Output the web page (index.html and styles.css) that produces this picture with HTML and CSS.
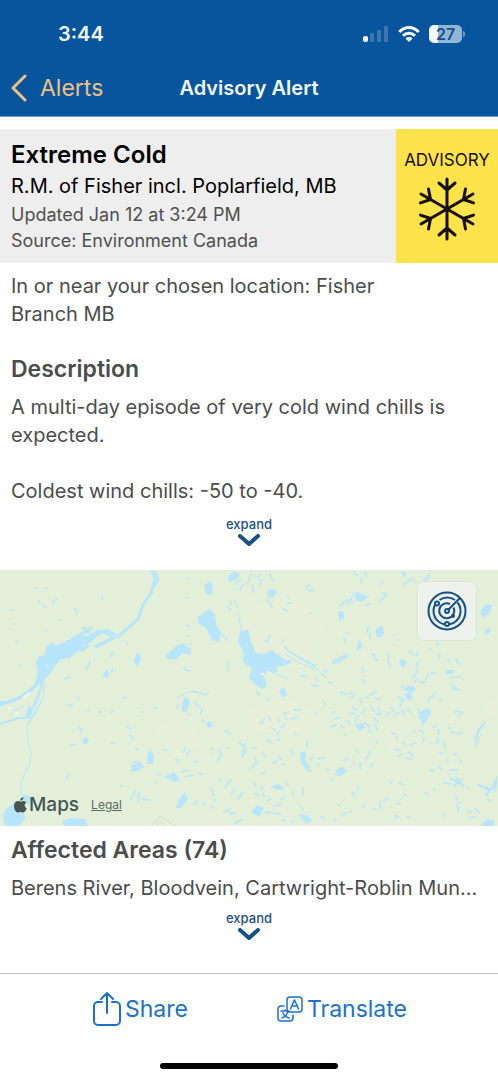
FILE: index.html
```html
<!DOCTYPE html>
<html lang="en">
<head>
<meta charset="utf-8">
<meta name="viewport" content="width=device-width, initial-scale=1">
<title>Advisory Alert</title>
<link rel="stylesheet" href="styles.css">
</head>
<body>
<div class="screen">
  <header class="top">
    <div class="status">
      <span class="time">3:44</span>
      <span class="status-icons">
        <svg class="signal" viewBox="0 0 26 18" aria-hidden="true"><rect x="0" y="11" width="5" height="6" rx="2" fill="#fff"/><g fill="#3d76b3"><rect x="7" y="8" width="4" height="9" rx="1"/><rect x="14" y="5" width="4" height="12" rx="1"/><rect x="21" y="1" width="4" height="16" rx="1"/></g></svg>
        <svg class="wifi" viewBox="0 0 22 18" aria-hidden="true"><g fill="none" stroke="#fff" stroke-width="3"><path d="M1.300 7C7 1 15 1 20.700 7"/><path d="M5 10.800c3.500-3.500 8.500-3.500 12 0"/></g><path d="M7.500 13.500c2-1.900 5-1.900 7 0L11 17z" fill="#fff"/></svg>
        <span class="battery"><span class="level">27</span></span>
      </span>
    </div>
    <nav class="bar">
      <a class="back" href="#"><svg viewBox="0 0 18 28" aria-hidden="true"><path d="M15 2L3 14l12 12" fill="none" stroke="#eec282" stroke-width="3" stroke-linecap="round" stroke-linejoin="round"/></svg>Alerts</a>
      <h1 class="title">Advisory Alert</h1>
    </nav>
  </header>

  <main class="content">
    <section class="card">
      <div class="card-text">
        <h2 class="card-title">Extreme Cold</h2>
        <p class="place">R.M. of Fisher incl. Poplarfield, MB</p>
        <p class="meta">Updated Jan 12 at 3:24 PM</p>
        <p class="meta">Source: Environment Canada</p>
      </div>
      <div class="badge">
        <span>ADVISORY</span>
        <svg class="flake" viewBox="-32 -32 64 64" aria-hidden="true"><defs><path id="arm" d="M0 0V-30M0-19L-8-26M0-19L8-26"/></defs><g fill="none" stroke="#130f05" stroke-width="3" stroke-linecap="round"><use href="#arm"/><use href="#arm" transform="rotate(60)"/><use href="#arm" transform="rotate(120)"/><use href="#arm" transform="rotate(180)"/><use href="#arm" transform="rotate(240)"/><use href="#arm" transform="rotate(300)"/></g></svg>
      </div>
    </section>

    <section class="copy">
      <p>In or near your chosen location: Fisher<br>Branch MB</p>
      <h2 class="heading">Description</h2>
      <p>A multi-day episode of very cold wind chills is expected.</p>
      <p class="chill">Coldest wind chills: -50 to -40.</p>
    </section>
    <button class="expand" type="button">expand<svg viewBox="0 0 22 13" aria-hidden="true"><path d="M2 2l9 8 9-8"/></svg></button>

    <section class="map" aria-label="Alert map">
      <svg class="map-art" viewBox="0 0 498 256" preserveAspectRatio="xMidYMid slice" aria-hidden="true">
        <rect width="498" height="256" fill="#e4efda"/>
        <g fill="#e8efdc" opacity=".7"><path d="M252 38l45-12 26 30-20 43-48-8-14-29zM245 138l50-8 28 18-18 20-49-8zM155 158l27-10 20 24-19 18zM382 165l14-15 8 22-12 10zM485 132l13-6v16l-10 3z"/></g>
        <g fill="#b9e5fa">
          <path d="M98 60l11-1 6 7-4 1-9-4-16 13 6-2-8 7-9 2-5 5-9 1-6 7-6 9-8 8-9 6 4-9 2-10-2-7 3-7 5 0 2-9 7-5 2 4 10-5 6-2 4-4 12 1z"/>
          <path d="M93 76l19-9 5 1-10 5-10 5zM29 135l4 5-3 9-5-3z"/>
          <path d="M204 15l6-4 3 5-1 9-6-1zM197 48l5-4 7-5 6 5 1 11 5 8-2 9-7-2-6-12-7-4z"/>
          <path d="M165 86l13-11 6-2 3 4 5 1-2 7-8-2-6 7-8-1zM134 89l4-7 3 6-3 8-4-3zM102 106l6-7 1 8-5 0z"/>
          <path d="M240 62l8-3 3 13 5 11 9 1 7-4 6 5 6 4 9 2-9 5-8 1 2 5-11-1-3 5 3 10-5 3-5-3-8-8 3-9-8-6-1-12-5-9z"/>
          <path d="M279 121l5-4 3 7-4 4zM228 7l6-6 6 3-3 5-8 3zM480 41l6-7 6 1-2 8-7 5zM484 62l4-5 3 3-4 5zM182 133l4-7 4 6-3 9-5 1z"/>
          <path d="M147 185l3-5 4 4-1 10-5 0zM132 195l9-3 3 5-8 5-5-1zM164 207l10-5 6 8-5 2zM178 231l7-9 3 7-7 9-5 0zM62 251l8-3 15 1 3 7H64z"/>
          <path d="M3 249l2-9 10-8 8 3 2 14-6 7H5zM21 229l4-5 7 4-3 7zM82 171l4-5 3 5-3 4zM335 201l7-5 5 5-7 6zM482 253l6-4 6 1v6h-13z"/>
          <path d="M270 217l8-3 7 5-5 1zM298 244l7 1 6 3-3 5-6-4zM251 242l6-7 7 3-5 9zM403 119l7-4 7 4-6 4zM421 151l3-7 4 5-5 6zM497 205v14l-5-3zM484 220l10-4-4 5z"/>
          <path d="M376 59l6-4 2 6-4 6-4-1zM268 20l6-1 2 5-5 4-4-3zM355 26l5-3 7 3-4 6-7-1zM338 42l5-1 1 6-4 4zM405 124l6-2 2 6-5 3zM355 155l6-2 5 4-6 4zM300 183l6-2-1 9 5 7-4 3-5-8zM358 73l4-1-1 7-5 2zM420 142l8-4 4 4-7 9-6-2zM399 91l4-2 4 4-5 5zM447 100l7 0-3 4-6 0zM206 153l4-2 3 5-4 2zM401 1l6 2-3 4z"/>
        </g>
        <g fill="none" stroke="#b9e5fa" stroke-linecap="round" stroke-linejoin="round">
          <path stroke-width="3" d="M152 0l3 9-4 14-8 12-5 14-10 9-10 9M40 112l-11 9-8 6-21 8M79 65l10-5M84 58l5 4M157 5l-2 9"/>
          <path stroke-width="2" d="M118 67l-6-5M42 112l-4 16-6 10M54 85l-5 12M27 148l-8 0-13 4-6 2M32 120l-10 7-10 5-12 0M155 15l4-5-4-8"/>
          <path stroke-width="1" d="M44 112l-1 16-8 16-8 12 1 16 3 10-1 12-5 8-4 11 0 11M43 113l-7 15 0 11-8 16M24 135l-10 6-4 4M24 124l-16 9M240 88l20 9 28 12M287 85l12 8 20 7M332 91l16-8M336 94l13-8M475 175l3-11 7-13M476 177l5-13M238 42l3 15 3 16M238 38l-4-8M181 125l12-4 13 4"/>
          <path stroke-width="2" d="M288 81l16 9 11 6M333 93l13-7M475 169l4-9 5-7M450 208l14 8M454 216l8-7M456 207l7 9M478 215l12 4M486 225l7-8"/>
          <g stroke-width="2" opacity=".75">
          <path d="M36 18l1 1M45 19l2-1M38 30l2 3M53 32l3-3M43 36l3 2M75 39l2 5M102 27l1 2M60 50l1 1M90 57l2 3M12 40l1 1M13 54l1 0M16 72l2 0M19 95l1 0M45 61l1 0M127 72l0 2M90 92l-4 8M70 107l-5 2M110 87l3-5M112 102l0-3M123 127l3 1M67 134l5 2M77 127l2 3M88 140l1 1M99 142l2 0M111 142l2-1M142 142l1 0M154 137l2 2M127 157l4 2M130 165l4 4M79 157l2 4M71 175l4 0M81 162l1-3M112 173l2 0M66 208l3-3M136 179l2 0M133 192l5 0M121 216l1 0M131 229l4-8M138 231l1-8M142 229l7 1M156 204l5 1M156 213l1 1M198 203l4 1M194 235l3-4M203 233l1 3M211 218l3 7M212 236l1 2M214 230l2 0M220 212l1-3M225 217l6-7M231 225l4-6M238 229l5-6M224 242l6-2M230 243l5 0M235 253l7-3M185 207l8-2M182 202l5-2M164 179l2 1M176 189l2 2M190 180l-3 5M183 182l3-4M195 191l3 2M216 190l4-1M219 179l2 8M212 178l1 2M228 178l1-1M239 172l5 5M242 187l4-7M245 174l-3 11M225 161l5 2M202 150l2 2M202 138l-1 6M195 133l4 4M205 125l3-2M193 122l3 0M188 144l2 1M177 138l2-3M178 128l1-1"/>
          <path d="M187 9l1 0M187 28l1-1M187 55l2 2M187 65l1 1M189 74l2 0M184 98l2 2M190 101l-4-1M226 68l1 2M222 65l2 1M227 92l1 8M227 36l4 4M230 31l1 3M240 20l3-5M236 14l4-4M248 12l3-8M253 22l0-6M258 7l2-2M261 10l-1 5M270 5l3 6M276 21l-4 6M267 30l3 4M272 38l-1-3M284 39l3 2M288 27l1 0M288 33l2 0M309 15l-3 3M309 21l4-2M310 43l2 0M343 49l-1-5M340 36l4-4M346 30l7 2M352 28l-5 6M357 5l-3-3M360 22l-7 3M362 8l-1 5M365 2l1 4M364 28l4-2M370 34l-5 2M380 31l7-6M386 24l-4-1M383 12l-2 2M403 15l7-6M413 8l2 4M424 10l5-5M425 14l4-8M344 68l1 4M347 62l1 1M359 71l1 7M368 57l-1 5M370 63l0 5M383 63l-2 4M397 70l1 0M374 88l4 3M376 86l-4-2M388 92l1-8M390 97l-1-5M409 81l3 2M418 82l-2 4M430 79l0 1M438 73l-1 2M440 84l-1 4M448 89l1 2M265 71l2 1M270 65l-2 5M282 72l2-2M285 77l2 2M277 85l2 0M300 105l6 2M315 109l3 2M321 104l5 3M329 112l2 1M312 115l5 1M286 124l-3 2M324 100l3 2M362 98l1 4M363 110l2 2M341 122l4 2M349 124l3-2M355 126l-4 1M370 125l6-3M375 128l5 2M366 127l2 1M360 129l2 4M366 139l-4 4M370 136l4 5M378 138l1 4M381 144l-4 1M353 137l3 3M350 143l5 1M357 146l-1 5M364 153l6 3M374 148l4 4M369 160l2 3M377 160l-2-6M347 151l3 3M341 155l2 3M333 142l2 0M335 149l4-2M336 155l-4 2M344 165l1 0M325 132l0 3M315 143l1 0"/>
          <path d="M257 121l2 4M262 115l2 2M266 129l2 1M284 144l5-2M294 140l7 0M278 149l2 3M285 148l3 2M292 149l5-2M281 158l3-3M269 147l2 4M272 158l3 2M277 165l2-3M265 149l-3 2M259 153l4 0M268 170l4 3M277 169l2 1M295 163l1 1M307 171l0 6M310 190l3-3M307 199l4 2M318 189l6-2M318 194l1 2M326 199l3 1M332 210l2-1M344 191l4-3M336 205l6-2M356 180l2 3M354 192l1 2M360 193l0 6M365 189l4-4M369 183l1-2M373 193l-2 3M376 170l1 3M390 212l1 1M400 213l3 2M384 231l4-3M381 239l-1-7M397 233l3 1M404 225l2 0M395 246l3 1M408 247l1 0M376 240l-4-2M365 234l-2 3M352 222l3 5M358 218l-1 2M338 235l2 0M342 244l4-1M350 242l1 0M336 249l-1 2M324 249l-3-2M303 218l0 7M292 222l2 3M286 213l2 2M281 229l3-2M275 236l6-2M273 243l7 1M282 250l3 1M292 252l1-1M301 237l2 3M306 253l5-3M268 230l3-1M265 243l6-1M251 199l4-6M255 188l2 6M262 183l4 4M265 202l-4 2M273 193l4-2M279 186l2 3M283 194l1 1M291 181l2 2M252 178l4 0M254 213l2 4M261 216l2 3M255 224l4 1M263 224l1 3"/>
          <path d="M425 112l-5 1M415 112l3-4M407 118l3 5M401 118l2-2M398 127l6 3M400 136l3-6M391 137l3 5M386 145l4-3M395 145l5-3M403 140l1 6M408 139l3 4M418 139l1 4M430 127l-2 5M435 122l-3 5M442 129l-2 2M450 108l10-2M452 119l8 1M463 109l1 1M451 115l5 3M413 108l5-9M416 97l2-5M428 105l-2 4M436 103l-6 1M455 142l4-1M462 142l-3 4M451 162l5 1M458 164l4-1M448 158l2 0M438 160l1 4M444 171l1 8M440 183l2 1M438 168l-1 5M420 160l3 3M424 168l-1 4M410 175l5-2M403 172l1 3M400 180l-5-1M409 182l4 4M398 187l4-3M406 188l5 1M396 167l2 3M391 163l4 1M413 162l2-1M433 157l3-2M447 189l1 3M439 197l3 2M430 201l4-1M450 200l7 0M460 190l2 2M457 184l-3 1M443 213l8 1M456 226l1 4M461 232l-4 3M458 237l0 5M468 243l4-2M476 239l3 4M470 248l5-1M444 244l1 2M434 219l1 0M425 223l3 2M467 218l2 0M496 215l-2 8M487 229l4 2M459 94l-3-5"/>
          </g>
        </g>
        <path d="M151 256l10-10 14 10M157 256l4-4 5 4" fill="none" stroke="#d5ddd2" stroke-width="1"/>
        <path d="M23 128l6-5M8 139l3-2M15 144l3-1M46 95l1 0M78 81l1 0M83 75l1 0M215 189l1-1M261 103l3 2" stroke="#f3f8ed" stroke-width="2"/>
      </svg>
      <button class="radar" type="button" aria-label="Radar"><svg viewBox="0 0 40 40" aria-hidden="true"><g fill="none" stroke="#175187" stroke-width="2"><circle cx="20" cy="20" r="18.500"/><path d="M20 20L33 7M30.500 11.500A13.500 13.500 0 1 1 10 11M12.500 9A13.500 13.500 0 0 1 28 9M26.500 16.500A7.500 7.500 0 1 1 23 13"/><g fill="#edf3ec"><circle cx="20" cy="20" r="2"/><circle cx="10" cy="12.500" r="2"/><circle cx="20" cy="33" r="2"/></g><circle cx="26" cy="25" r="1" fill="#175187"/></g></svg></button>
      <div class="map-credit">
        <span class="maps-logo"><svg viewBox="0 0 13 16" aria-hidden="true"><path fill="#475652" d="M9.300 0C9.500 2 8 3.900 6.200 3.800 6 2 7.500.300 9.300 0zM6.500 4.700c.6 0 1.600-.9 3-.8 1.200.1 2.200.6 2.800 1.500-2.400 1.500-2 4.700.5 5.700-.6 1.900-2 4.500-3.600 4.500-1 0-1.400-.6-2.600-.6s-1.600.6-2.600.6C1.900 15.600 0 11.900 0 8.900 0 5.700 2 4 4 4c1.200 0 2 .7 2.500.7z"/></svg>Maps</span>
        <a class="legal" href="#">Legal</a>
      </div>
    </section>

    <section class="areas">
      <h2 class="heading">Affected Areas (74)</h2>
      <p class="area-list">Berens River, Bloodvein, Cartwright-Roblin Mun...</p>
    </section>
    <button class="expand" type="button">expand<svg viewBox="0 0 22 13" aria-hidden="true"><path d="M2 2l9 8 9-8"/></svg></button>
  </main>

  <footer class="footer">
    <div class="actions">
      <button class="action" type="button"><svg class="share" viewBox="0 0 28 36" aria-hidden="true"><path d="M9 11H5a4 4 0 0 0-4 4v15a4 4 0 0 0 4 4h18a4 4 0 0 0 4-4V15a4 4 0 0 0-4-4h-4M14 22V2M8 8l6-6 6 6"/></svg>Share</button>
      <button class="action" type="button"><svg class="translate" viewBox="0 0 26 26" aria-hidden="true"><path d="M7 10H4a3 3 0 0 0-3 3v9a3 3 0 0 0 3 3h9a3 3 0 0 0 3-3v-3"/><rect x="10" y="1" width="15" height="15" rx="3"/><path d="M13.500 13l4-9 4 9M15 10h5M4 15h8M8 14v1M11 15c-1 4-3 6-6 7M6 17c1 3 3 4 6 5"/></svg>Translate</button>
    </div>
    <div class="home"></div>
  </footer>
</div>
</body>
</html>
```

FILE: styles.css
```css
* { box-sizing: border-box; }
body {
  margin: 0;
  background: #fff;
  color: #4c4c4c;
  font-family: Inter, Roboto, "Liberation Sans", sans-serif;
  font-size: 20px;
  line-height: 28px;
}
h1, h2, p { margin: 0; }
button { border: 0; padding: 0; background: none; font: inherit; cursor: pointer; }
svg { display: block; flex: none; }
.screen { min-height: 100vh; display: flex; flex-direction: column; }
.top { background: #08549d; color: #f4fbff; border-bottom: 1px solid #6b9cc9; padding-top: 20px; }
.status { display: flex; justify-content: space-between; align-items: center; height: 28px; padding: 0 36px 0 58px; }
.time { font-size: 20px; font-weight: 600; }
.status-icons { display: flex; align-items: center; gap: 9px; }
.signal { width: 26px; height: 18px; }
.wifi { width: 22px; height: 18px; }
.battery {
  position: relative;
  width: 33px;
  height: 18px;
  border-radius: 5px;
  background: linear-gradient(90deg, #f4fbff 27%, #90b5d7 27%);
  color: #174f86;
}
.battery::after { content: ""; position: absolute; right: -3px; top: 6px; width: 2px; height: 6px; border-radius: 0 2px 2px 0; background: #6f9dc9; }
.level { display: block; text-align: center; font-size: 16px; line-height: 18px; font-weight: 600; }
.bar { display: grid; grid-template-columns: 1fr auto 1fr; align-items: center; height: 68px; padding: 12px 10px 0; }
.back { display: flex; align-items: center; gap: 12px; color: #eec282; font-size: 23px; text-decoration: none; }
.back svg { width: 18px; height: 28px; }
.title { font-size: 20px; font-weight: 600; line-height: 28px; }
.content { flex: 1; padding-top: 12px; }
.card { display: flex; background: #eee; min-height: 134px; }
.card-text { flex: 1; padding: 11px 11px 9px; min-width: 0; color: #000; }
.card-title { font-size: 24px; line-height: 30px; font-weight: 600; }
.place { font-size: 20px; line-height: 32px; }
.meta { font-size: 18px; line-height: 26px; color: #505050; }
.badge { width: 102px; background: #ffe34a; color: #130f05; display: flex; flex-direction: column; align-items: center; gap: 4px; padding-top: 18px; font-size: 17px; line-height: 26px; }
.flake { width: 64px; height: 64px; }
.copy { padding: 9px 11px 0; }
.heading { font-size: 23px; line-height: 30px; font-weight: 600; }
.copy .heading { margin: 26px 0 9px; }
.chill { margin-top: 28px; }
.expand { display: flex; flex-direction: column; align-items: center; width: 100%; margin-top: 9px; color: #175187; font-size: 13px; line-height: 20px; font-weight: 500; }
.expand svg { width: 22px; height: 13px; }
.expand path { fill: none; stroke: #175187; stroke-width: 4; stroke-linecap: round; stroke-linejoin: round; }
.map { position: relative; height: 256px; margin-top: 23px; overflow: hidden; }
.map-art { width: 100%; height: 100%; }
.radar { position: absolute; top: 12px; right: 22px; width: 58px; height: 58px; border-radius: 6px; background: #edf3ec; box-shadow: 0 0 2px #c5d4c5; display: grid; place-items: center; }
.radar svg { width: 40px; height: 40px; }
.map-credit { position: absolute; left: 14px; bottom: 7px; display: flex; align-items: center; gap: 12px; }
.maps-logo { display: flex; align-items: center; gap: 2px; color: #475652; font-size: 19px; font-weight: 500; }
.maps-logo svg { width: 13px; height: 16px; }
.legal { color: #5d6a61; font-size: 12px; }
.areas { padding: 9px 11px 0; }
.area-list { margin-top: 9px; white-space: nowrap; overflow: hidden; text-overflow: ellipsis; }
.areas + .expand { margin-top: 6px; }
.footer { border-top: 1px solid #c0c0c0; padding-bottom: 11px; }
.actions { display: flex; justify-content: space-between; height: 70px; padding: 0 91px 0 93px; align-items: center; }
.action { display: flex; align-items: center; justify-content: center; gap: 4px; color: #1b72cc; font-size: 23px; }
.action svg { fill: none; stroke: #1b72cc; stroke-width: 2; stroke-linecap: round; stroke-linejoin: round; }
.share { width: 28px; height: 36px; }
.action .translate { width: 26px; height: 26px; stroke-width: 1.5; }
.home { width: 178px; height: 6px; margin: 19px auto 0; border-radius: 3px; background: #000; }
```
